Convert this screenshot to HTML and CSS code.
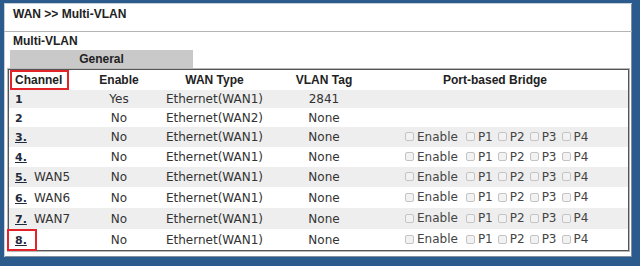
FILE: index.html
```html
<!DOCTYPE html>
<html lang="en">
<head>
    <meta charset="UTF-8">
    <meta name="viewport" content="width=device-width, initial-scale=1.0">
    <title>WAN &gt;&gt; Multi-VLAN</title>
    <link rel="stylesheet" href="styles.css">
</head>
<body>
    <div class="frame">
        <div class="page-title">WAN &gt;&gt; Multi-VLAN</div>
        <div class="section-title">Multi-VLAN</div>
        <div class="tab">General</div>

        <table class="vlan-table">
            <colgroup>
                <col class="col-channel">
                <col class="col-enable">
                <col class="col-type">
                <col class="col-tag">
                <col class="col-bridge">
            </colgroup>
            <thead>
                <tr class="head-row">
                    <th class="channel has-mark">Channel<span class="mark mark-head"></span></th>
                    <th>Enable</th>
                    <th>WAN Type</th>
                    <th>VLAN Tag</th>
                    <th class="bridge-head">Port-based Bridge</th>
                </tr>
            </thead>
            <tbody>
                <tr class="row-a short">
                    <td class="channel"><span class="num">1</span></td>
                    <td>Yes</td>
                    <td>Ethernet(WAN1)</td>
                    <td>2841</td>
                    <td></td>
                </tr>
                <tr class="row-b mid">
                    <td class="channel"><span class="num">2</span></td>
                    <td>No</td>
                    <td>Ethernet(WAN2)</td>
                    <td>None</td>
                    <td></td>
                </tr>
                <tr class="row-a">
                    <td class="channel"><a class="num link">3.</a></td>
                    <td>No</td>
                    <td>Ethernet(WAN1)</td>
                    <td>None</td>
                    <td class="bridge">
                        <label class="opt opt-enable"><input type="checkbox" disabled>Enable</label><label class="opt"><input type="checkbox" disabled>P1</label><label class="opt"><input type="checkbox" disabled>P2</label><label class="opt"><input type="checkbox" disabled>P3</label><label class="opt"><input type="checkbox" disabled>P4</label>
                    </td>
                </tr>
                <tr class="row-b">
                    <td class="channel"><a class="num link">4.</a></td>
                    <td>No</td>
                    <td>Ethernet(WAN1)</td>
                    <td>None</td>
                    <td class="bridge">
                        <label class="opt opt-enable"><input type="checkbox" disabled>Enable</label><label class="opt"><input type="checkbox" disabled>P1</label><label class="opt"><input type="checkbox" disabled>P2</label><label class="opt"><input type="checkbox" disabled>P3</label><label class="opt"><input type="checkbox" disabled>P4</label>
                    </td>
                </tr>
                <tr class="row-a">
                    <td class="channel"><a class="num link">5.</a>WAN5</td>
                    <td>No</td>
                    <td>Ethernet(WAN1)</td>
                    <td>None</td>
                    <td class="bridge">
                        <label class="opt opt-enable"><input type="checkbox" disabled>Enable</label><label class="opt"><input type="checkbox" disabled>P1</label><label class="opt"><input type="checkbox" disabled>P2</label><label class="opt"><input type="checkbox" disabled>P3</label><label class="opt"><input type="checkbox" disabled>P4</label>
                    </td>
                </tr>
                <tr class="row-b tall">
                    <td class="channel"><a class="num link">6.</a>WAN6</td>
                    <td>No</td>
                    <td>Ethernet(WAN1)</td>
                    <td>None</td>
                    <td class="bridge">
                        <label class="opt opt-enable"><input type="checkbox" disabled>Enable</label><label class="opt"><input type="checkbox" disabled>P1</label><label class="opt"><input type="checkbox" disabled>P2</label><label class="opt"><input type="checkbox" disabled>P3</label><label class="opt"><input type="checkbox" disabled>P4</label>
                    </td>
                </tr>
                <tr class="row-a tall">
                    <td class="channel"><a class="num link">7.</a>WAN7</td>
                    <td>No</td>
                    <td>Ethernet(WAN1)</td>
                    <td>None</td>
                    <td class="bridge">
                        <label class="opt opt-enable"><input type="checkbox" disabled>Enable</label><label class="opt"><input type="checkbox" disabled>P1</label><label class="opt"><input type="checkbox" disabled>P2</label><label class="opt"><input type="checkbox" disabled>P3</label><label class="opt"><input type="checkbox" disabled>P4</label>
                    </td>
                </tr>
                <tr class="row-b tall">
                    <td class="channel has-mark"><a class="num link">8.</a><span class="mark mark-row"></span></td>
                    <td>No</td>
                    <td>Ethernet(WAN1)</td>
                    <td>None</td>
                    <td class="bridge">
                        <label class="opt opt-enable"><input type="checkbox" disabled>Enable</label><label class="opt"><input type="checkbox" disabled>P1</label><label class="opt"><input type="checkbox" disabled>P2</label><label class="opt"><input type="checkbox" disabled>P3</label><label class="opt"><input type="checkbox" disabled>P4</label>
                    </td>
                </tr>
            </tbody>
        </table>
    </div>
</body>
</html>
```

FILE: styles.css
```css
html, body { margin: 0; padding: 0; background: #2b5b8c; }
body { font-family: "DejaVu Sans", Verdana, sans-serif; font-size: 12px; color: #333; }

.frame {
    width: 640px; height: 266px; box-sizing: border-box;
    background: white;
    border-style: solid; border-color: #2b5b8c;
    border-width: 3px 8px 9px 4px;
    box-shadow: inset 1px 1px 0 #c6ced8, inset -1px -1px 0 #7f8fa0;
}

.page-title, .section-title, .tab, .vlan-table th {
    font-family: "Liberation Sans", Arial, sans-serif; font-weight: bold; color: #222;
}
.page-title {
    height: 28px; line-height: 22px; padding-left: 9px;
    border-bottom: 1px solid #b4b4b4;
}
.section-title { height: 18px; line-height: 19px; padding-left: 9px; }
.tab {
    width: 183px; height: 19px; line-height: 19px; margin-left: 6px;
    background: #c9c9c9; text-align: center;
}

.vlan-table {
    width: 621px; margin-left: 4px;
    table-layout: fixed; border-collapse: separate; border-spacing: 0;
    border: 1px solid #555;
    box-shadow: 0 0 0 1px #b8b8b8;
}
.col-channel { width: 71px; }
.col-enable { width: 78px; }
.col-type { width: 113px; }
.col-tag { width: 106px; }
.col-bridge { width: 251px; }

.vlan-table th, .vlan-table td { padding: 0; text-align: center; white-space: nowrap; }
.vlan-table th { height: 20px; font-size: 12px; }
.vlan-table td { height: 20px; }
.vlan-table tr.short td { height: 18px; }
.vlan-table tr.mid td { height: 19px; }
.vlan-table tr.tall td { height: 21px; }
.vlan-table .channel { text-align: left; padding-left: 6px; }
.vlan-table .bridge-head { padding-right: 15px; }
.vlan-table .bridge { text-align: left; padding-left: 28px; color: #444; }

.row-a td { background: #eeeeee; }
.row-b td { background: #ffffff; }

.num { display: inline-block; width: 19px; font-weight: bold; font-size: 11px; color: #1f2a3a; }
.link { text-decoration: underline; }

.opt { display: inline-flex; align-items: center; margin-right: 5px; }
.opt-enable { margin-right: 8px; }
.opt input {
    appearance: none; -webkit-appearance: none;
    width: 9px; height: 9px; margin: 0 3px 0 0; box-sizing: border-box;
    border: 1px solid #c4c4c4; border-radius: 2px; background: #f2f2f2;
}

.has-mark { position: relative; }
.mark { position: absolute; border: 2px solid #e3222a; box-sizing: border-box; }
.mark-head { left: 1px; top: 0; width: 59px; height: 20px; }
.mark-row { left: -2px; top: 0; width: 30px; height: 22px; }
```
